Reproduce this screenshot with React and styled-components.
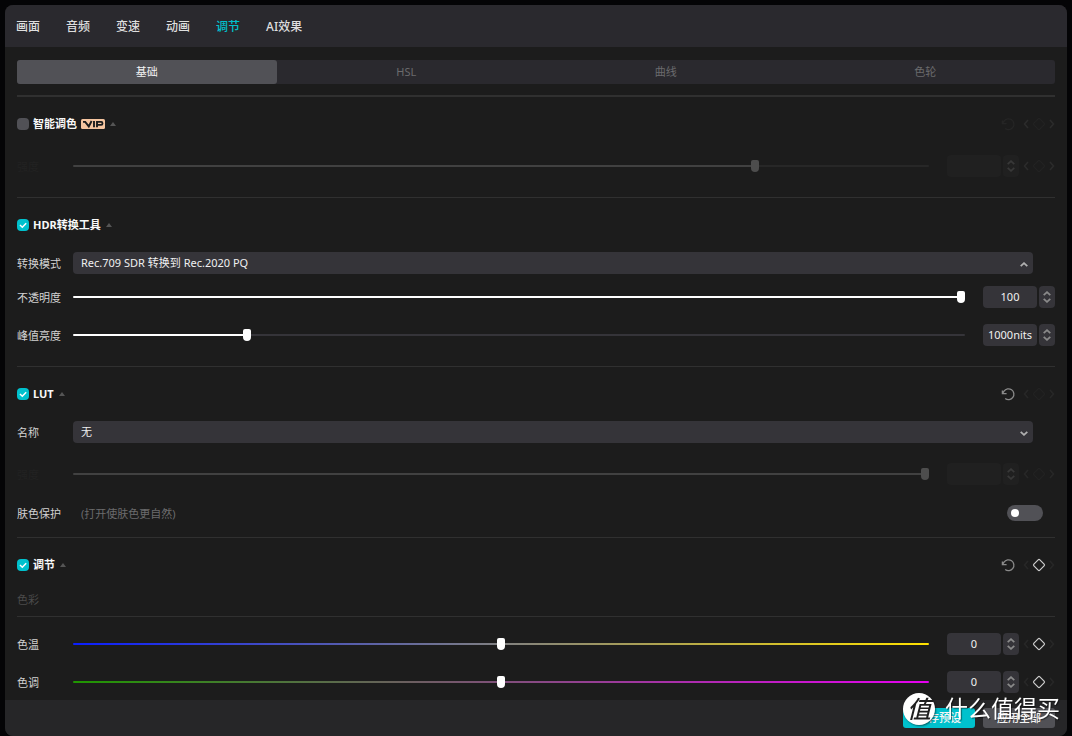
import React, { useId, useState } from "react";
import styled, { createGlobalStyle, css } from "styled-components";

const c = {
  page: "#040406",
  panel: "#1c1c1c",
  bar: "#2a292e",
  footer: "#262628",
  field: "#353439",
  active: "#515156",
  line: "#303030",
  accent: "#00c1cd",
  text: "#d2d2d2",
  muted: "#6b6b6d",
  dim: "#4b4b4b",
};

const Global = createGlobalStyle`
  *, *::before, *::after { box-sizing: border-box; }
  body {
    margin: 0;
    background: ${c.page};
    color: ${c.text};
    font: 11px/16px "Noto Sans", "Noto Sans CJK SC", sans-serif;
  }
  button, input, select { font: inherit; color: inherit; margin: 0; }
`;

const Page = styled.div`
  height: 100vh;
  padding: 5px 5px 0;
`;

const Panel = styled.main`
  display: flex;
  flex-direction: column;
  height: 100%;
  border-radius: 8px;
  overflow: hidden;
  background: ${c.panel};
`;

const Nav = styled.nav`
  display: flex;
  flex: none;
  align-items: center;
  gap: 26px;
  height: 42px;
  padding: 2px 11px 0;
  background: ${c.bar};
`;

const NavButton = styled.button`
  padding: 0;
  border: 0;
  background: none;
  font: 500 12px/18px "Noto Sans", "Noto Sans CJK SC", sans-serif;
  color: ${(p) => (p.$active ? c.accent : "#dedede")};
`;

const Content = styled.div`
  flex: 1;
  min-height: 0;
  padding: 13px 12px 0;
  overflow-y: auto;
  scrollbar-width: none;
`;

const Segments = styled.div`
  display: grid;
  grid-template-columns: repeat(4, 1fr);
  border-radius: 3px;
  background: ${c.bar};
`;

const Segment = styled.button`
  height: 24px;
  padding: 0;
  border: 0;
  border-radius: 3px;
  background: ${(p) => (p.$active ? c.active : "none")};
  color: ${(p) => (p.$active ? "#f2f2f2" : c.muted)};
`;

const Sections = styled.div`
  margin-top: 11px;
  border-top: 2px solid ${c.line};
`;

const Section = styled.section`
  padding: 16px 0 ${(p) => p.$bottom ?? 20}px;
  & + & { border-top: 1px solid ${c.line}; }
`;

const SectionHead = styled.div`
  display: flex;
  align-items: center;
  height: 22px;
`;

const HeadLabel = styled.label`
  display: flex;
  align-items: center;
  gap: 4px;
  font-weight: 700;
  color: #f8f8f8;
`;

const CheckBox = styled.span`
  display: grid;
  width: 12px;
  height: 12px;
  & > * { grid-area: 1 / 1; }
  svg { pointer-events: none; }
`;

const CheckInput = styled.input`
  appearance: none;
  width: 12px;
  height: 12px;
  border-radius: 4px;
  background: ${c.active};
  &:checked { background: ${c.accent}; }
`;

const Vip = styled.svg`
  margin-left: 4px;
`;

const Fold = styled.button`
  display: flex;
  padding: 0;
  margin-left: 5px;
  border: 0;
  background: none;
`;

const Spacer = styled.span`
  flex: 1;
`;

const IconButton = styled.button`
  display: flex;
  padding: 0;
  border: 0;
  background: none;
  color: ${(p) => p.$color ?? "#8a8a8a"};
`;

const Keys = styled.div`
  display: flex;
  align-items: center;
  gap: 3px;
  margin-left: ${(p) => p.$left ?? 4}px;
`;

const Row = styled.div`
  display: flex;
  align-items: center;
  height: ${(p) => p.$height ?? 22}px;
  margin-top: ${(p) => p.$top ?? 16}px;
`;

const RowLabel = styled.label`
  flex: none;
  width: 56px;
  padding-top: 2px;
  color: ${(p) => (p.$faint ? "#222222" : c.text)};
`;

const Hint = styled.span`
  flex: 1;
  padding: 2px 0 0 8px;
  color: ${c.muted};
`;

const thumb = css`
  appearance: none;
  width: 8px;
  height: 12px;
  margin-top: -5px;
  border: 0;
  border-radius: 2px 2px 4px 4px;
  background: ${(p) => (p.$faint ? "#4d4d4d" : "#ffffff")};
`;

const Range = styled.input`
  appearance: none;
  flex: 1;
  min-width: 0;
  height: 12px;
  background: none;
  &::-webkit-slider-runnable-track {
    height: 2px;
    border-radius: 1px;
    background: ${(p) =>
      p.$gradient ??
      `linear-gradient(${p.$faint ? "#414141" : "#ffffff"} 0 0) 0 / var(--fill) 100% no-repeat ${
        p.$faint ? "#272727" : c.field
      }`};
  }
  &::-webkit-slider-thumb { ${thumb} }
`;

const NumberInput = styled.input`
  width: 54px;
  height: 22px;
  margin-left: 18px;
  padding: 0 0 2px;
  border: 0;
  border-radius: 4px;
  background: ${(p) => (p.$faint ? "#202020" : c.field)};
  color: ${(p) => (p.$faint ? "#202020" : "#f0f0f0")};
  text-align: center;
`;

const Stepper = styled.div`
  display: flex;
  flex-direction: column;
  align-items: center;
  justify-content: center;
  gap: 2px;
  width: 16px;
  height: 22px;
  margin-left: 2px;
  border-radius: 4px;
  background: ${(p) => (p.$faint ? "#202020" : c.field)};
`;

const SelectWrap = styled.div`
  display: grid;
  flex: 1;
  align-items: center;
  margin-right: 22px;
  & > * { grid-area: 1 / 1; }
  svg {
    justify-self: end;
    margin: 3px 5px 0 0;
    pointer-events: none;
    color: #b0b0b0;
  }
`;

const Select = styled.select`
  appearance: none;
  height: 22px;
  padding: 0 20px 0 8px;
  border: 0;
  border-radius: 4px;
  background: ${c.field};
  color: #f0f0f0;
`;

const Switch = styled.input`
  appearance: none;
  display: flex;
  align-items: center;
  width: 36px;
  height: 16px;
  margin-right: 12px;
  padding: 0 4px;
  border-radius: 8px;
  background: ${c.active};
  &::before {
    content: "";
    width: 8px;
    height: 8px;
    border-radius: 50%;
    background: #ffffff;
  }
  &:checked { justify-content: flex-end; background: ${c.accent}; }
`;

const GroupTitle = styled.h3`
  margin: 16px 0 0;
  padding-bottom: 8px;
  border-bottom: 1px solid ${c.line};
  font: inherit;
  color: ${c.dim};
`;

const Footer = styled.footer`
  display: flex;
  flex: none;
  justify-content: flex-end;
  gap: 8px;
  padding: 8px 12px;
  background: ${c.footer};
`;

const FooterButton = styled.button`
  width: 72px;
  height: 20px;
  padding: 0;
  border: 0;
  border-radius: 3px;
  background: ${(p) => (p.$primary ? c.accent : c.active)};
  color: #f4f4f4;
  font-weight: 500;
`;

const Watermark = styled.div`
  position: fixed;
  right: 12px;
  bottom: 11px;
  display: flex;
  align-items: center;
  gap: 10px;
  color: #ffffff;
  font: 400 23px/28px "Noto Sans CJK SC", sans-serif;
  text-shadow: 1px 1px 1px #00000080;
  pointer-events: none;
  & > :last-child { padding-bottom: 4px; }
`;

const Seal = styled.span`
  width: 32px;
  height: 32px;
  border-radius: 50%;
  background: #ffffff;
  box-shadow: 1px 1px 2px #00000080;
  color: #1f1f1f;
  font-size: 24px;
  font-weight: 500;
  font-style: italic;
  line-height: 29px;
  text-align: center;
  text-shadow: none;
`;

const Stroke = ({ w, h, d, width = 2 }) => (
  <svg width={w} height={h} viewBox={`0 0 ${w} ${h}`} fill="none" stroke="currentColor" strokeWidth={width} aria-hidden="true">
    <path d={d} />
  </svg>
);

const Up = () => <Stroke w={8} h={5} d="M.7 4.2 4 1.2l3.3 3" width={1.8} />;
const Down = () => <Stroke w={8} h={5} d="M.7.8 4 3.8l3.3-3" width={1.8} />;

const Reset = ({ color }) => (
  <IconButton $color={color} aria-label="重置">
    <Stroke w={14} h={14} width={1.3} d="M4.2 11.5A5.4 5.4 0 1 0 3 4.2L1.6 6.4M1.4 3.6v3h4.2" />
  </IconButton>
);

const KeyframeControls = ({ on, faint = "#272727", left }) => (
  <Keys $left={left}>
    <IconButton $color={faint} aria-label="上一个关键帧">
      <Stroke w={6} h={10} d="M5 1 1.5 5 5 9" width={1.6} />
    </IconButton>
    <IconButton $color={on ? "#cfcfcf" : "#232323"} aria-label="关键帧">
      <svg width="14" height="14" viewBox="0 0 14 14" fill="none" stroke="currentColor" strokeWidth="1.2" aria-hidden="true">
        <rect x="2.8" y="2.8" width="8.4" height="8.4" rx="1.2" transform="rotate(45 7 7)" />
      </svg>
    </IconButton>
    <IconButton $color={faint} aria-label="下一个关键帧">
      <Stroke w={6} h={10} d="M1 1 4.5 5 1 9" width={1.6} />
    </IconButton>
  </Keys>
);

function Head({ title, checked, vip, children }) {
  const [on, setOn] = useState(checked);
  return (
    <SectionHead>
      <HeadLabel>
        <CheckBox>
          <CheckInput type="checkbox" checked={on} onChange={(e) => setOn(e.target.checked)} />
          {on && (
            <svg width="12" height="12" viewBox="0 0 12 12" fill="none" stroke="#fff" strokeWidth="1.5" aria-hidden="true">
              <path d="m3 6 2.3 2.2L9.2 4.2" />
            </svg>
          )}
        </CheckBox>
        {title}
      </HeadLabel>
      {vip && (
        <Vip width="24" height="10" viewBox="0 0 24 10" role="img" aria-label="VIP">
          <rect width="24" height="10" rx="1.5" fill="#f5c5a0" />
          <path d="M2 2.9h2.2L7.8 7.4 10.6 2M13 2v6.2M16 8.2V2.9h4.2c1.7 0 1.7 3 0 3H16" fill="none" stroke="#1c1c1c" strokeWidth="1.9" />
        </Vip>
      )}
      <Fold aria-label="收起">
        <svg width="6" height="4" viewBox="0 0 6 4" fill="#555" aria-hidden="true">
          <path d="M3 0 6 4H0z" />
        </svg>
      </Fold>
      <Spacer />
      {children}
    </SectionHead>
  );
}

function SliderRow({ label, value, max = 100, min = 0, text, faint, gradient, top, keys }) {
  const id = useId();
  const [v, setV] = useState(value);
  const fill = `${((v - min) / (max - min)) * 100}%`;
  return (
    <Row $top={top}>
      <RowLabel htmlFor={id} $faint={faint}>{label}</RowLabel>
      <Range
        id={id}
        type="range"
        min={min}
        max={max}
        value={v}
        disabled={faint}
        $faint={faint}
        $gradient={gradient}
        style={{ "--fill": fill }}
        onChange={(e) => setV(Number(e.target.value))}
      />
      <NumberInput aria-label={label} value={text ? `${v}${text}` : faint ? "" : v} readOnly $faint={faint} />
      <Stepper $faint={faint}>
        <IconButton $color={faint ? "#383838" : undefined} aria-label="增加"><Up /></IconButton>
        <IconButton $color={faint ? "#383838" : undefined} aria-label="减少"><Down /></IconButton>
      </Stepper>
      {keys}
    </Row>
  );
}

function SelectRow({ label, option, open }) {
  const id = useId();
  return (
    <Row>
      <RowLabel htmlFor={id}>{label}</RowLabel>
      <SelectWrap>
        <Select id={id}><option>{option}</option></Select>
        {open ? <Up /> : <Down />}
      </SelectWrap>
    </Row>
  );
}

const tabs = ["画面", "音频", "变速", "动画", "调节", "AI效果"];
const segments = ["基础", "HSL", "曲线", "色轮"];

export default function App() {
  return (
    <Page>
      <Global />
      <Panel>
        <Nav>
          {tabs.map((t) => <NavButton key={t} $active={t === "调节"}>{t}</NavButton>)}
        </Nav>
        <Content>
          <Segments>
            {segments.map((s) => <Segment key={s} $active={s === "基础"}>{s}</Segment>)}
          </Segments>
          <Sections>
            <Section>
              <Head title="智能调色" checked={false} vip>
                <Reset color="#252525" />
                <KeyframeControls left={8} faint="#2b2b2b" />
              </Head>
              <SliderRow label="强度" value={80} faint top={20} keys={<KeyframeControls faint="#2b2b2b" />} />
            </Section>
            <Section>
              <Head title="HDR转换工具" checked />
              <SelectRow label="转换模式" option="Rec.709 SDR 转换到 Rec.2020 PQ" open />
              <SliderRow label="不透明度" value={100} top={12} />
              <SliderRow label="峰值亮度" value={1000} max={5200} text="nits" />
            </Section>
            <Section $bottom={12}>
              <Head title="LUT" checked>
                <Reset />
                <KeyframeControls left={8} />
              </Head>
              <SelectRow label="名称" option="无" />
              <SliderRow label="强度" value={100} faint top={20} keys={<KeyframeControls />} />
              <Row $height={24}>
                <RowLabel htmlFor="skin">肤色保护</RowLabel>
                <Hint>(打开使肤色更自然)</Hint>
                <Switch id="skin" type="checkbox" role="switch" />
              </Row>
            </Section>
            <Section>
              <Head title="调节" checked>
                <Reset />
                <KeyframeControls on left={8} />
              </Head>
              <GroupTitle>色彩</GroupTitle>
              <SliderRow
                label="色温"
                value={0}
                min={-50}
                max={50}
                gradient="linear-gradient(90deg, #0a1eff, #808080 50%, #ffe100)"
                keys={<KeyframeControls on />}
              />
              <SliderRow
                label="色调"
                value={0}
                min={-50}
                max={50}
                gradient="linear-gradient(90deg, #1f9600, #80507a 50%, #e600f0)"
                keys={<KeyframeControls on />}
              />
            </Section>
          </Sections>
        </Content>
        <Footer>
          <FooterButton $primary>保存预设</FooterButton>
          <FooterButton>应用全部</FooterButton>
        </Footer>
      </Panel>
      <Watermark>
        <Seal>值</Seal>
        <span>什么值得买</span>
      </Watermark>
    </Page>
  );
}
